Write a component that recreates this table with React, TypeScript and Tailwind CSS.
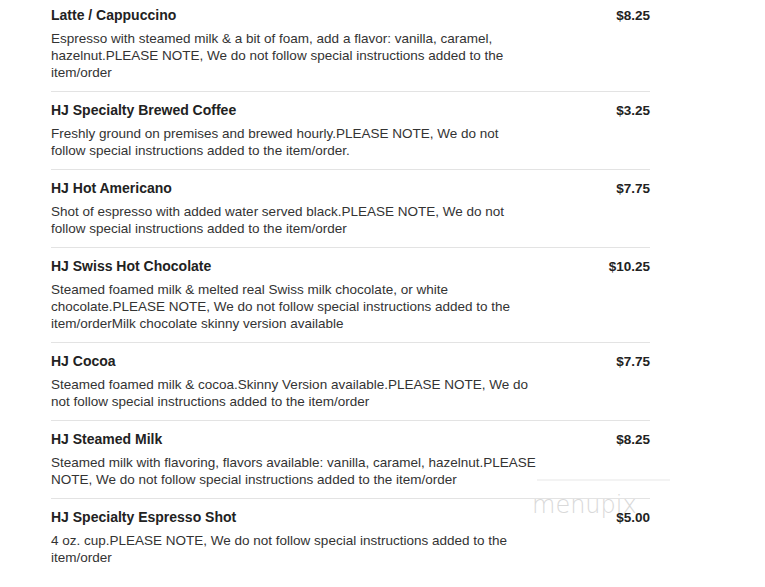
import React from "react";

const items = [
  {
    name: "Latte / Cappuccino",
    price: "$8.25",
    lines: [
      "Espresso with steamed milk & a bit of foam, add a flavor: vanilla, caramel,",
      "hazelnut.PLEASE NOTE, We do not follow special instructions added to the",
      "item/order",
    ],
  },
  {
    name: "HJ Specialty Brewed Coffee",
    price: "$3.25",
    lines: [
      "Freshly ground on premises and brewed hourly.PLEASE NOTE, We do not",
      "follow special instructions added to the item/order.",
    ],
  },
  {
    name: "HJ Hot Americano",
    price: "$7.75",
    lines: [
      "Shot of espresso with added water served black.PLEASE NOTE, We do not",
      "follow special instructions added to the item/order",
    ],
  },
  {
    name: "HJ Swiss Hot Chocolate",
    price: "$10.25",
    lines: [
      "Steamed foamed milk & melted real Swiss milk chocolate, or white",
      "chocolate.PLEASE NOTE, We do not follow special instructions added to the",
      "item/orderMilk chocolate skinny version available",
    ],
  },
  {
    name: "HJ Cocoa",
    price: "$7.75",
    lines: [
      "Steamed foamed milk & cocoa.Skinny Version available.PLEASE NOTE, We do",
      "not follow special instructions added to the item/order",
    ],
  },
  {
    name: "HJ Steamed Milk",
    price: "$8.25",
    lines: [
      "Steamed milk with flavoring, flavors available: vanilla, caramel, hazelnut.PLEASE",
      "NOTE, We do not follow special instructions added to the item/order",
    ],
  },
  {
    name: "HJ Specialty Espresso Shot",
    price: "$5.00",
    lines: [
      "4 oz. cup.PLEASE NOTE, We do not follow special instructions added to the",
      "item/order",
    ],
  },
];

export default function App() {
  return (
    <div
      className="relative w-[765px] h-[587px] overflow-hidden bg-white"
      style={{ fontFamily: '"Liberation Sans", Arial, sans-serif' }}
    >
      <div className="absolute left-[537px] top-[479px] w-[133px] h-[2px] bg-[#f3f3f3]" />
      <div
        className="absolute left-[532px] top-[493px] text-[24px] leading-[24px] text-[#d9d9d9] select-none"
        style={{ fontFamily: '"DejaVu Sans", sans-serif', fontWeight: 200 }}
      >
        menupix
      </div>
      <div className="relative ml-[51px] w-[599px] -mt-[3px]">
        {items.map((it, i) => (
          <div
            key={i}
            className={`pt-[10px] pb-[10px] ${i < items.length - 1 ? "border-b border-[#e3e3e3]" : ""}`}
          >
            <div className="flex justify-between items-start">
              <div className="text-[14px] leading-[17px] font-bold text-[#222]">{it.name}</div>
              <div className="text-[13.5px] leading-[17px] font-bold text-[#222]">{it.price}</div>
            </div>
            <div className="mt-[6px] text-[13.5px] leading-[17px] text-[#333]">
              {it.lines.map((l, j) => (
                <div key={j} className="whitespace-nowrap">
                  {l}
                </div>
              ))}
            </div>
          </div>
        ))}
      </div>
    </div>
  );
}
